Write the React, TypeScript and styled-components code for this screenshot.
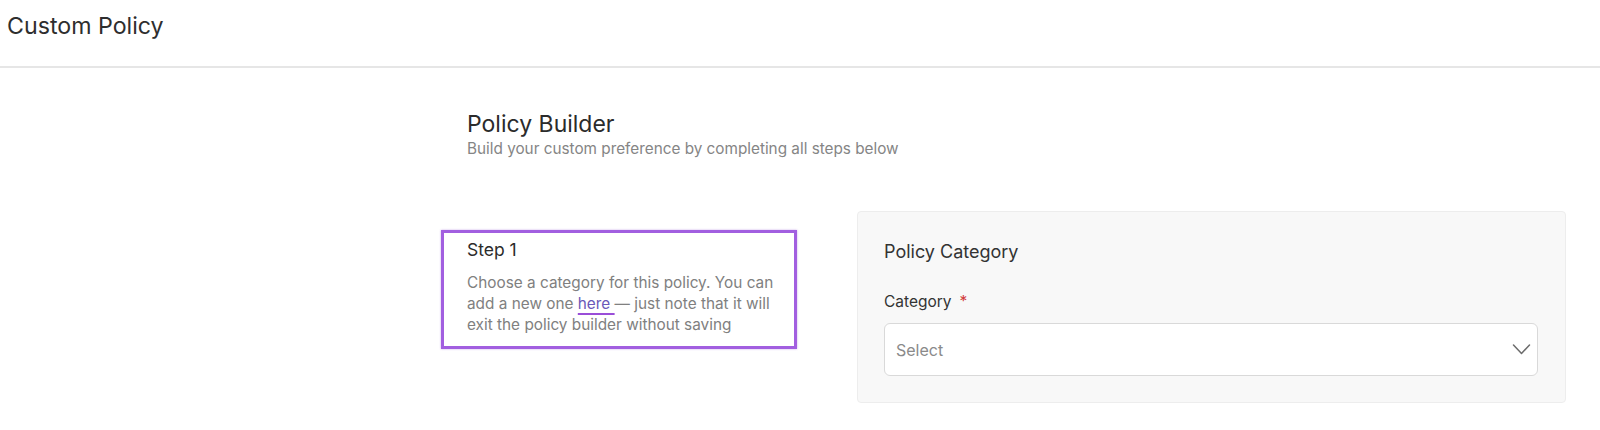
import styled, { createGlobalStyle } from 'styled-components';

const GlobalStyle = createGlobalStyle`
  body {
    margin: 0;
    background: #ffffff;
    font-family: Inter, 'Noto Sans', sans-serif;
    color: #2b2b2b;
  }
`;

const Header = styled.header`
  height: 68px;
  border-bottom: 2px solid #e6e6e6;
  padding: 12px 0 0 7px;
  box-sizing: border-box;
`;

const PageTitle = styled.h1`
  margin: 0;
  font-size: 23.2px;
  font-weight: 400;
  line-height: 28px;
  color: #2e2e2e;
`;

const Content = styled.main`
  padding: 42px 34px 0 441px;
`;

const Intro = styled.div`
  padding-left: 26px;
`;

const BuilderTitle = styled.h2`
  margin: 0;
  font-size: 23px;
  font-weight: 400;
  line-height: 28px;
  color: #2b2b2b;
`;

const BuilderSubtitle = styled.p`
  margin: 1px 0 0;
  font-size: 15.3px;
  line-height: 20px;
  color: #858585;
`;

const StepRow = styled.div`
  display: grid;
  grid-template-columns: 356px 1fr;
  gap: 60px;
  align-items: start;
  margin-top: 52px;
`;

const StepBox = styled.div`
  margin-top: 19px;
  border: 3px solid #a25fe0;
  padding: 5px 18px 10px 23px;
  min-height: 108px;
  box-sizing: border-box;
  box-shadow: 0 0 2px rgba(140, 70, 210, 0.45);
`;

const StepTitle = styled.h3`
  margin: 0;
  font-size: 17.5px;
  font-weight: 400;
  line-height: 24px;
  color: #2b2b2b;
`;

const StepText = styled.p`
  margin: 10px 0 0;
  font-size: 15.35px;
  line-height: 21.2px;
  color: #808080;
`;

const HereLink = styled.a`
  color: #6a58b8;
  text-decoration: underline;
  text-decoration-color: #9a4ed8;
  text-decoration-thickness: 2px;
  text-underline-offset: 4px;
`;

const Panel = styled.section`
  background: #f8f8f8;
  border: 1px solid #ededed;
  border-radius: 4px;
  padding: 28px 27px 26px 26px;
`;

const PanelTitle = styled.h3`
  margin: 0;
  font-size: 18px;
  font-weight: 400;
  line-height: 24px;
  color: #333333;
`;

const FieldLabel = styled.label`
  display: block;
  margin-top: 27px;
  font-size: 15.5px;
  line-height: 22px;
  color: #333333;
`;

const Required = styled.span`
  color: #d23c3c;
  margin-left: 8px;
`;

const SelectBox = styled.div`
  margin-top: 10px;
  height: 53px;
  background: #ffffff;
  border: 1px solid #d9d9d9;
  border-radius: 6px;
  display: flex;
  align-items: center;
  justify-content: space-between;
  padding: 0 6px 0 11px;
  box-sizing: border-box;
`;

const Placeholder = styled.span`
  font-size: 16px;
  color: #8a8a8a;
`;

const Chevron = () => (
  <svg width="19" height="11" viewBox="0 0 19 11" fill="none">
    <path d="M1.5 1 L9.5 9.5 L17.5 1" stroke="#6b6b6b" strokeWidth="1.5" strokeLinecap="round" strokeLinejoin="round" />
  </svg>
);

export default function App() {
  return (
    <>
      <GlobalStyle />
      <Header>
        <PageTitle>Custom Policy</PageTitle>
      </Header>
      <Content>
        <Intro>
          <BuilderTitle>Policy Builder</BuilderTitle>
          <BuilderSubtitle>Build your custom preference by completing all steps below</BuilderSubtitle>
        </Intro>
        <StepRow>
          <StepBox>
            <StepTitle>Step 1</StepTitle>
            <StepText>
              Choose a category for this policy. You can add a new one <HereLink>here </HereLink>— just note
              that it will exit the policy builder without saving
            </StepText>
          </StepBox>
          <Panel>
            <PanelTitle>Policy Category</PanelTitle>
            <FieldLabel>
              Category<Required>*</Required>
            </FieldLabel>
            <SelectBox>
              <Placeholder>Select</Placeholder>
              <Chevron />
            </SelectBox>
          </Panel>
        </StepRow>
      </Content>
    </>
  );
}
